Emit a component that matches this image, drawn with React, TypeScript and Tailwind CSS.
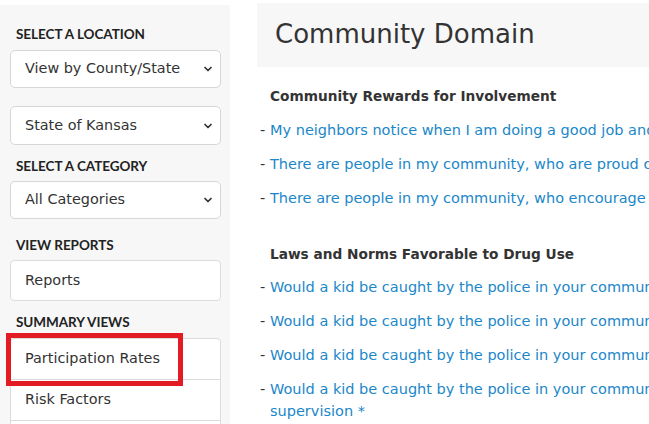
import { ChevronDown } from "lucide-react";

const body = "font-['DejaVu_Sans',sans-serif]";

function Heading({ children, className = "" }: { children: string; className?: string }) {
  return (
    <div
      className={`px-4 font-['Lato',sans-serif] text-[13.5px] leading-4 font-bold tracking-[-0.05px] text-[#222] ${className}`}
    >
      {children}
    </div>
  );
}

function Select({ label, className = "" }: { label: string; className?: string }) {
  return (
    <div
      className={`ml-2.5 flex h-[38px] w-[211px] items-center justify-between rounded-[5px] border border-[#d6d6d6] bg-white pl-[14px] pr-[6px] ${className}`}
    >
      <span className="text-[14.4px] text-[#333]">{label}</span>
      <ChevronDown size={12} strokeWidth={3.5} className="text-[#333]" />
    </div>
  );
}

const rewards = [
  "My neighbors notice when I am doing a good job and let me know about it",
  "There are people in my community, who are proud of me when I do something well",
  "There are people in my community, who encourage me to do my best",
];

const laws = [
  "Would a kid be caught by the police in your community if he or she drank alcohol",
  "Would a kid be caught by the police in your community if he or she carried a handgun",
  "Would a kid be caught by the police in your community if he or she smoked marijuana",
];

function Item({ text }: { text: string }) {
  return (
    <div className="flex whitespace-nowrap text-[14.5px] leading-[22px]">
      <span className="w-[10px] shrink-0 text-[#333]">-</span>
      <span className="text-[#1b87c9]">{text}</span>
    </div>
  );
}

export default function App() {
  return (
    <div className={`flex h-[424px] w-[649px] overflow-hidden bg-white ${body}`}>
      <aside className="mt-[5px] w-[230px] shrink-0 bg-[#f7f7f7] pt-[21px]">
        <Heading>SELECT A LOCATION</Heading>
        <Select label="View by County/State" className="mt-[8px]" />
        <Select label="State of Kansas" className="mt-[18px] h-[39px]" />
        <Heading className="mt-[13px]">SELECT A CATEGORY</Heading>
        <Select label="All Categories" className="mt-[7px]" />
        <Heading className="mt-[18px]">VIEW REPORTS</Heading>
        <div className="ml-2.5 mt-[7px] flex h-[41px] w-[211px] items-center rounded-[4px] border border-[#dcdcdc] bg-white pl-[14px] text-[14.4px] text-[#333]">
          Reports
        </div>
        <Heading className="mt-[13px]">SUMMARY VIEWS</Heading>
        <div className="relative ml-2.5 mt-[8px] w-[211px] rounded-t-[4px] border border-[#dcdcdc] bg-white text-[14.4px] text-[#333]">
          <div className="flex h-[41px] items-center border-b border-[#dcdcdc] pl-[14px]">
            Participation Rates
          </div>
          <div className="flex h-[41px] items-center border-b border-[#dcdcdc] pl-[14px]">
            Risk Factors
          </div>
          <div className="flex h-[41px] items-center pl-[14px]">Protective Factors</div>
          <div className="absolute left-[-5px] top-[-6px] h-[53px] w-[177px] border-[5px] border-[#e31b23]" />
        </div>
      </aside>

      <main className="ml-[27px] flex min-w-0 flex-1 flex-col pt-[3px]">
        <div className="flex h-[64px] shrink-0 items-center bg-[#f7f7f7] pl-[18px] pb-[2px]">
          <h1 className="whitespace-nowrap text-[26px] font-medium text-[#333]">Community Domain</h1>
        </div>
        <div className="pl-[3px]">
          <h2 className="mt-[19px] pl-[10px] text-[13.7px] font-bold text-[#333]">
            Community Rewards for Involvement
          </h2>
          <div className="mt-[12px] flex flex-col gap-[12px]">
            {rewards.map((t) => (
              <Item key={t} text={t} />
            ))}
          </div>
          <h2 className="mt-[35px] pl-[10px] text-[13.7px] font-bold text-[#333]">
            Laws and Norms Favorable to Drug Use
          </h2>
          <div className="mt-[12px] flex flex-col gap-[12px]">
            {laws.map((t) => (
              <Item key={t} text={t} />
            ))}
            <div className="flex text-[14.5px] leading-[22px]">
              <span className="w-[10px] shrink-0 text-[#333]">-</span>
              <span className="text-[#1b87c9]">
                <span className="whitespace-nowrap">
                  Would a kid be caught by the police in your community if he or she
                </span>
                <br />
                supervision *
              </span>
            </div>
          </div>
        </div>
      </main>
    </div>
  );
}
